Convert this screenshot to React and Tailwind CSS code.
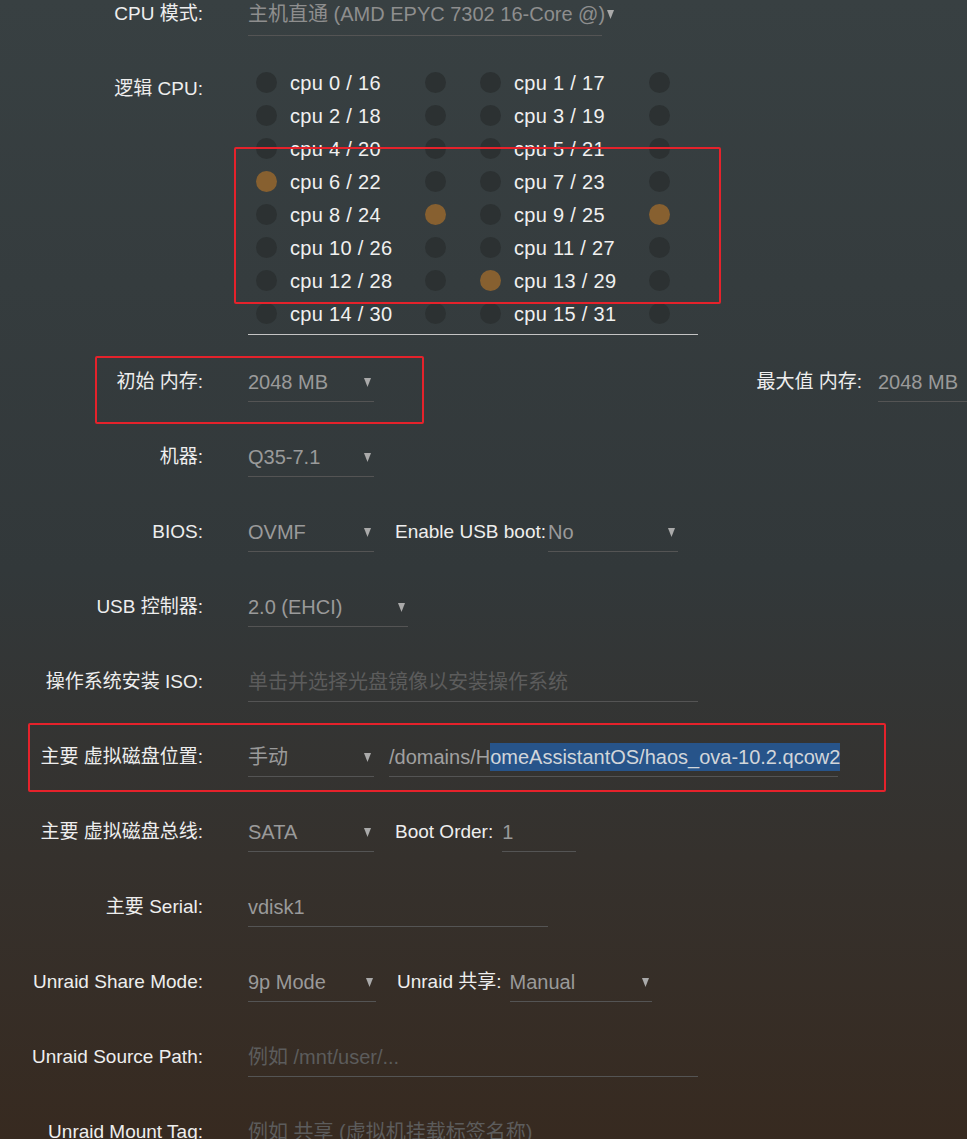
const font = { fontFamily: '"Liberation Sans", "Noto Sans CJK SC", sans-serif' }

const Arrow = () => (
  <svg width="7" height="10" viewBox="0 0 7 10" className="shrink-0">
    <polygon points="0,1 7,1 3.5,10" fill="#aaaaaa" />
  </svg>
)

const Select = ({ value, w, h = 'h-[32px]' }) => (
  <div className={`flex shrink-0 items-start border-b border-[#545454] ${h} ${w}`}>
    <div className="flex h-[24px] w-full items-center justify-between pr-[3px]">
      <span className="whitespace-nowrap text-[20px] text-[#9a9a9a]">{value}</span>
      <Arrow />
    </div>
  </div>
)

const Input = ({ value, placeholder, w }) => (
  <div className={`h-[32px] shrink-0 border-b border-[#545454] ${w}`}>
    {value ? (
      <span className="whitespace-nowrap text-[20px] text-[#9a9a9a]">{value}</span>
    ) : (
      <span className="whitespace-nowrap text-[20px] text-[#5c5c5c]">{placeholder}</span>
    )}
  </div>
)

const Row = ({ label, children, className = 'h-[75px]' }) => (
  <div className={`flex items-start ${className}`}>
    <div className="w-[203px] shrink-0 text-right text-[#eeeeee]">{label}</div>
    <div className="ml-[45px] flex items-start">{children}</div>
  </div>
)

const SubLabel = ({ children, ml = 'ml-[21px]', mr = 'mr-[4px]' }) => (
  <span className={`${ml} ${mr} shrink-0 whitespace-nowrap text-[#eeeeee]`}>{children}</span>
)

const Dot = ({ on }) => (
  <div className={`h-[21px] w-[21px] shrink-0 rounded-full ${on ? 'bg-[#876030]' : 'bg-[#2c3132]'}`} />
)

const cpuPairs = Array.from({ length: 8 }, (_, r) => [
  { n: r * 2, a: false, b: false },
  { n: r * 2 + 1, a: false, b: false },
])
cpuPairs[3][0].a = true
cpuPairs[4][0].b = true
cpuPairs[4][1].b = true
cpuPairs[6][1].a = true

const CpuCell = ({ n, a, b }) => (
  <div className="flex w-[224px] shrink-0 items-center">
    <Dot on={a} />
    <span className="ml-[13px] w-[135px] shrink-0 whitespace-nowrap text-[20px] tracking-[0.3px] text-[#f0f0f0]">
      cpu {n} / {n + 16}
    </span>
    <Dot on={b} />
  </div>
)

export default function App() {
  return (
    <div
      className="relative h-[1139px] w-full overflow-hidden bg-linear-to-b from-[#384042] via-[#32383a] via-50% to-[#372a20] text-[19px] leading-[24px]"
      style={font}
    >
      <div className="pt-[2px]">
        <Row label="CPU 模式:" className="h-[64px]">
          <div className="flex h-[34px] w-[354px] items-start border-b border-[#545454]">
            <div className="flex h-[24px] items-center gap-[2px]">
              <span className="whitespace-nowrap text-[20px] text-[#8e8e8e]">主机直通 (AMD EPYC 7302 16-Core @)</span>
              <Arrow />
            </div>
          </div>
        </Row>

        <div className="flex items-start">
          <div className="w-[203px] shrink-0 pt-[11px] text-right text-[#eeeeee]">逻辑 CPU:</div>
          <div className="ml-[45px] w-[450px] overflow-visible border-b border-[#c4c4c4] pb-[4px] pl-[8px]">
            {cpuPairs.map((pair, i) => (
              <div key={i} className="flex h-[33px] items-center">
                <CpuCell {...pair[0]} />
                <CpuCell {...pair[1]} />
              </div>
            ))}
          </div>
        </div>

        <div className="h-[35px]" />

        <Row label="初始 内存:">
          <Select value="2048 MB" w="w-[126px]" />
          <div className="w-[488px] shrink-0 text-right text-[#eeeeee]">最大值 内存:</div>
          <div className="ml-[16px]">
            <Select value="2048 MB" w="w-[126px]" />
          </div>
        </Row>

        <Row label="机器:">
          <Select value="Q35-7.1" w="w-[126px]" />
        </Row>

        <Row label="BIOS:">
          <Select value="OVMF" w="w-[126px]" />
          <SubLabel mr="mr-[2px]">Enable USB boot:</SubLabel>
          <Select value="No" w="w-[130px]" />
        </Row>

        <Row label="USB 控制器:">
          <Select value="2.0 (EHCI)" w="w-[160px]" />
        </Row>

        <Row label="操作系统安装 ISO:">
          <Input placeholder="单击并选择光盘镜像以安装操作系统" w="w-[450px]" />
        </Row>

        <Row label="主要 虚拟磁盘位置:">
          <Select value="手动" w="w-[126px]" />
          <div className="ml-[15px] h-[32px] w-[449px] shrink-0 border-b border-[#545454]">
            <span className="whitespace-nowrap text-[20px] text-[#a0a0a0]">
              /domains/H
              <span className="bg-[#27548a] py-[3px] text-[#d2d6da]">omeAssistantOS/haos_ova-10.2.qcow2</span>
            </span>
          </div>
        </Row>

        <Row label="主要 虚拟磁盘总线:">
          <Select value="SATA" w="w-[126px]" />
          <SubLabel mr="mr-[9px]">Boot Order:</SubLabel>
          <Input value="1" w="w-[74px]" />
        </Row>

        <Row label="主要 Serial:">
          <Input value="vdisk1" w="w-[300px]" />
        </Row>

        <Row label="Unraid Share Mode:">
          <Select value="9p Mode" w="w-[128px]" />
          <SubLabel mr="mr-[8px]">Unraid 共享:</SubLabel>
          <Select value="Manual" w="w-[142px]" />
        </Row>

        <Row label="Unraid Source Path:">
          <Input placeholder="例如 /mnt/user/..." w="w-[450px]" />
        </Row>

        <Row label="Unraid Mount Tag:">
          <Input placeholder="例如 共享 (虚拟机挂载标签名称)" w="w-[450px]" />
        </Row>
      </div>

      <div className="absolute left-[234px] top-[147px] h-[157px] w-[487px] rounded-[2px] border-2 border-[#e5222b]" />
      <div className="absolute left-[95px] top-[356px] h-[68px] w-[329px] rounded-[2px] border-2 border-[#e5222b]" />
      <div className="absolute left-[28px] top-[723px] h-[69px] w-[858px] rounded-[2px] border-2 border-[#e5222b]" />
    </div>
  )
}
